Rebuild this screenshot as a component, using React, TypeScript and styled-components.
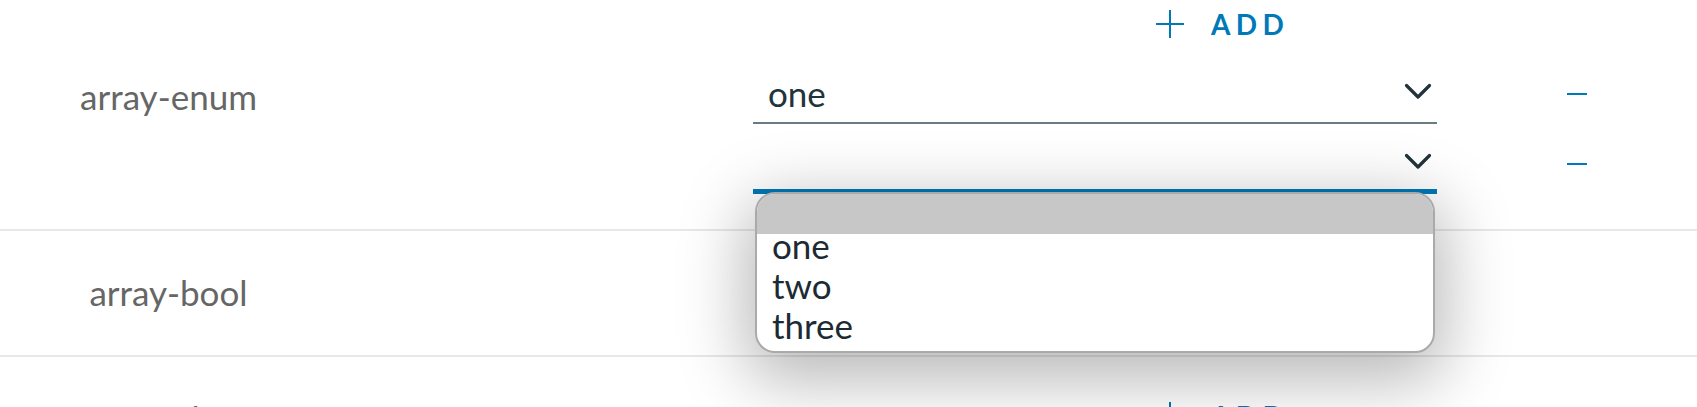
import React from 'react';
import styled, { createGlobalStyle } from 'styled-components';

const GlobalStyle = createGlobalStyle`
  html, body {
    margin: 0;
    padding: 0;
    background: #ffffff;
    overflow: hidden;
  }
  body {
    font-family: Lato, 'Open Sans', sans-serif;
  }
`;

interface FieldRow {
  name: string;
  values: string[];
}

const rows: FieldRow[] = [
  { name: 'array-enum', values: ['one', ''] },
  { name: 'array-bool', values: [] },
  { name: 'array-date', values: [] },
];

const options = ['', 'one', 'two', 'three'];

// the page is scrolled a little, first row starts above the viewport
const Table = styled.div`
  margin-top: -35px;
  width: 1697px;
`;

const Row = styled.div`
  display: grid;
  grid-template-columns: 337px 416px 930px;
  border-bottom: 2px solid #e8e8e8;
  padding: 35px 0 35px;
`;

const Label = styled.div`
  display: flex;
  align-items: center;
  justify-content: center;
  font-size: 35px;
  color: #666666;
  padding-bottom: 2px;
`;

const Controls = styled.div`
  grid-column: 3;
  display: flex;
  flex-direction: column;
`;

const AddButton = styled.button`
  align-self: flex-start;
  margin: 0 0 6px 403px;
  height: 48px;
  display: flex;
  align-items: center;
  gap: 27px;
  padding: 0;
  border: none;
  background: transparent;
  color: #0079b8;
  font-family: Lato, sans-serif;
  font-size: 28px;
  font-weight: 700;
  letter-spacing: 0.19em;
  cursor: pointer;
`;

const Items = styled.div`
  display: flex;
  flex-direction: column;
`;

const Item = styled.div`
  display: flex;
  align-items: stretch;
  height: 70px;
`;

const SelectBox = styled.div<{ focused?: boolean }>`
  position: relative;
  width: 684px;
  box-sizing: border-box;
  display: flex;
  align-items: center;
  justify-content: space-between;
  padding: 7px 5px 0 15px;
  border-bottom: 2px solid ${p => (p.focused ? '#0079b8' : '#6b7b83')};
  box-shadow: ${p => (p.focused ? 'inset 0 -3px 0 #0079b8' : 'none')};
  font-size: 35px;
  color: #21333b;
`;

const Value = styled.span`
  padding-top: 3px;
`;

const Chevron = styled.svg`
  width: 28px;
  height: 18px;
  flex: none;
`;

const RemoveButton = styled.button`
  display: flex;
  align-items: center;
  padding: 9px 0 0 130px;
  border: none;
  background: transparent;
  cursor: pointer;
`;

const Minus = styled.span`
  display: block;
  width: 20px;
  height: 2px;
  background: #0079b8;
`;

const Listbox = styled.ul`
  position: absolute;
  left: 2px;
  right: 2px;
  top: 100%;
  height: 161px;
  box-sizing: border-box;
  margin: 0;
  padding: 0;
  list-style: none;
  background: #ffffff;
  border: 2px solid #aaaaaa;
  border-radius: 20px;
  overflow: hidden;
  box-shadow: 0 18px 66px 10px rgba(0, 0, 0, 0.28);
  z-index: 5;
`;

const Option = styled.li<{ active?: boolean }>`
  height: 40px;
  line-height: 22px;
  padding-left: 15px;
  font-size: 35px;
  color: #1c2b33;
  background: ${p => (p.active ? '#c7c7c7' : 'transparent')};
`;

const PlusIcon = () => (
  <svg width="28" height="28" viewBox="0 0 28 28">
    <path d="M14 0v28M0 14h28" stroke="#0079b8" strokeWidth="2" fill="none" />
  </svg>
);

const ChevronIcon = () => (
  <Chevron viewBox="0 0 28 18">
    <polyline
      points="2.5,2.5 14,14 25.5,2.5"
      fill="none"
      stroke="#21333b"
      strokeWidth="3.2"
      strokeLinecap="round"
      strokeLinejoin="round"
    />
  </Chevron>
);

const App = () => {
  return (
    <>
      <GlobalStyle />
      <Table>
        {rows.map(row => (
          <Row key={row.name}>
            <Label>{row.name}</Label>
            <Controls>
              <AddButton>
                <PlusIcon />
                ADD
              </AddButton>
              {row.values.length > 0 && (
                <Items>
                  {row.values.map((value, idx) => {
                    const open = idx === row.values.length - 1;
                    return (
                      <Item key={idx}>
                        <SelectBox focused={open}>
                          <Value>{value}</Value>
                          <ChevronIcon />
                          {open && (
                            <Listbox>
                              {options.map((opt, i) => (
                                <Option key={i} active={i === 0}>
                                  {opt}
                                </Option>
                              ))}
                            </Listbox>
                          )}
                        </SelectBox>
                        <RemoveButton>
                          <Minus />
                        </RemoveButton>
                      </Item>
                    );
                  })}
                </Items>
              )}
            </Controls>
          </Row>
        ))}
      </Table>
    </>
  );
};

export default App;
